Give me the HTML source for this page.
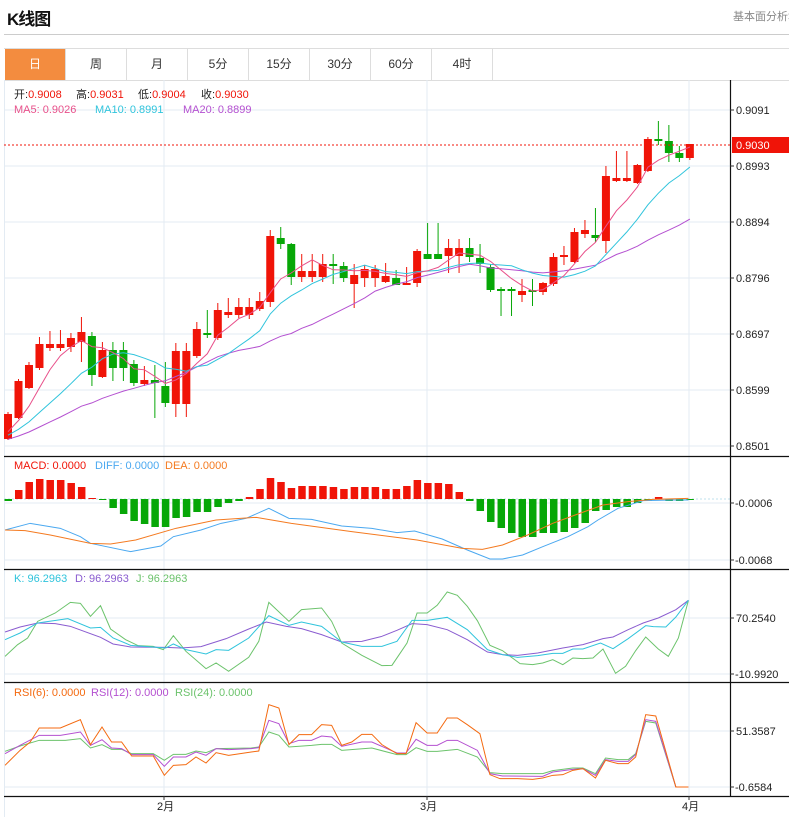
<!DOCTYPE html>
<html><head><meta charset="utf-8">
<style>
html,body{margin:0;padding:0;background:#fff;width:789px;height:817px;overflow:hidden;font-family:"Liberation Sans","Noto Sans CJK SC",sans-serif;}
.hdr{position:absolute;left:7px;top:5px;font-size:17px;font-weight:bold;color:#111;letter-spacing:-1px}
.rt{position:absolute;left:733px;top:8px;font-size:11px;color:#888;white-space:nowrap}
.hl{position:absolute;left:4px;top:34px;width:785px;height:1px;background:#ccc}
.tabs{position:absolute;left:4px;top:48px;width:785px;height:31px;border-top:1px solid #ddd;border-bottom:1px solid #ddd;}
.tab{position:absolute;top:0;height:31px;width:60px;border-right:1px solid #ddd;font-size:12px;line-height:31px;text-align:center;color:#333}
.tab.on{background:#f38c3f;color:#fff}
svg{position:absolute;left:0;top:0}
</style></head><body>
<div class="hdr">K线图</div>
<div class="rt">基本面分析&gt;</div>
<div class="hl"></div>
<div class="tabs">
<div class="tab on" style="left:1px">日</div>
<div class="tab" style="left:62px">周</div>
<div class="tab" style="left:123px">月</div>
<div class="tab" style="left:184px">5分</div>
<div class="tab" style="left:245px">15分</div>
<div class="tab" style="left:306px">30分</div>
<div class="tab" style="left:367px">60分</div>
<div class="tab" style="left:428px">4时</div>
</div>
<svg id="s" width="789" height="817" xmlns="http://www.w3.org/2000/svg" font-family="Liberation Sans, Noto Sans CJK SC, sans-serif" font-size="11">
<g stroke="#e3ebf3" stroke-width="1">
<line x1="4" y1="110" x2="730" y2="110"/><line x1="4" y1="166" x2="730" y2="166"/><line x1="4" y1="222" x2="730" y2="222"/><line x1="4" y1="278" x2="730" y2="278"/><line x1="4" y1="334" x2="730" y2="334"/><line x1="4" y1="390" x2="730" y2="390"/><line x1="4" y1="446" x2="730" y2="446"/>
<line x1="4" y1="503" x2="730" y2="503"/><line x1="4" y1="560" x2="730" y2="560"/>
<line x1="4" y1="618" x2="730" y2="618"/><line x1="4" y1="674" x2="730" y2="674"/>
<line x1="4" y1="731" x2="730" y2="731"/><line x1="4" y1="787" x2="730" y2="787"/>
<line x1="164" y1="80" x2="164" y2="796"/><line x1="427" y1="80" x2="427" y2="796"/><line x1="689" y1="80" x2="689" y2="796"/>
<line x1="4.5" y1="80" x2="4.5" y2="817"/>
</g>
<line x1="4" y1="499" x2="730" y2="499" stroke="#bfe0ee" stroke-dasharray="2,2"/>
<g id="cand"></g>
<g id="ma" fill="none" stroke-width="1"></g>
<g id="macd"></g>
<g fill="none" stroke-width="1">
<g transform="translate(0,440) scale(0.5025,0.3333)">
<polyline vector-effect="non-scaling-stroke" stroke="#4aa8f0" points="10,270 60,250 120,265 160,290 180,310 260,335 320,318 345,290 400,270 440,250 490,235 535,205 575,235 620,238 680,258 740,265 790,278 825,273 880,297 930,330 975,357 1000,357 1040,345 1080,320 1130,290 1170,260 1190,240 1230,205 1280,182 1340,180 1370,180"/>
<polyline vector-effect="non-scaling-stroke" stroke="#f47a20" points="10,270 50,272 100,285 180,310 220,312 270,300 350,265 430,240 510,232 580,250 700,275 830,300 920,325 960,328 1000,315 1050,285 1100,250 1150,222 1200,195 1250,185 1300,178 1370,175"/>
</g>
<g transform="translate(0,568) scale(0.5025,0.3333)">
<polyline vector-effect="non-scaling-stroke" stroke="#6cc36c" points="10,265 35,230 55,210 75,160 110,135 140,103 160,106 180,145 200,113 220,183 250,215 275,233 305,235 325,245 345,203 370,250 410,302 430,285 455,310 495,268 515,220 535,103 575,160 600,125 640,120 660,160 680,225 720,262 760,293 780,292 810,225 830,135 850,135 870,112 890,72 910,82 930,115 950,158 975,232 1000,248 1035,287 1060,290 1080,285 1100,275 1120,290 1140,270 1160,272 1180,270 1200,243 1225,316 1245,295 1265,248 1285,207 1310,243 1330,265 1350,210 1370,97"/>
<polyline vector-effect="non-scaling-stroke" stroke="#8a5cd0" points="10,192 40,177 75,165 110,167 140,175 200,208 225,228 260,237 330,238 360,240 400,236 450,212 495,183 530,162 570,175 600,182 640,200 680,222 720,220 760,205 790,187 820,167 850,170 890,185 930,215 970,252 1000,260 1030,262 1070,255 1120,240 1160,230 1200,212 1220,207 1250,185 1280,165 1310,150 1345,125 1370,97"/>
<polyline vector-effect="non-scaling-stroke" stroke="#30c4dc" points="10,215 40,195 75,165 135,152 180,180 200,178 225,210 260,232 330,240 345,228 370,245 410,258 430,245 455,247 495,210 535,143 575,172 600,162 640,175 680,222 720,235 760,235 790,220 820,157 850,157 890,148 930,185 970,245 1000,260 1030,268 1070,263 1100,256 1120,256 1140,243 1160,243 1195,225 1220,242 1250,212 1285,173 1300,176 1325,177 1345,147 1370,97"/>
</g>
<g transform="translate(0,682) scale(0.5025,0.3333)">
<polyline vector-effect="non-scaling-stroke" stroke="#6cc36c" points="10,208 40,192 78,175 130,175 160,170 180,198 203,188 222,202 242,202 262,215 305,215 327,235 345,217 370,217 390,207 410,212 430,200 500,198 515,195 535,150 555,160 575,195 620,190 640,187 660,187 680,205 740,198 790,218 808,218 828,197 850,208 870,208 910,202 950,225 975,272 1000,275 1080,275 1100,266 1140,258 1160,258 1185,275 1205,228 1230,233 1250,233 1265,215 1285,118 1305,123 1345,315 1370,315"/>
<polyline vector-effect="non-scaling-stroke" stroke="#b450d0" points="10,215 40,190 78,160 120,160 160,150 180,190 203,173 222,198 242,200 262,218 305,218 327,253 345,225 370,225 390,210 410,220 430,200 455,203 500,200 515,197 535,115 555,125 575,185 595,175 620,175 640,162 660,165 680,193 720,180 740,180 790,213 808,213 828,172 850,190 870,190 890,175 910,175 950,205 975,275 1000,282 1080,283 1100,270 1140,262 1160,260 1185,280 1205,233 1230,238 1250,238 1265,218 1285,113 1305,118 1345,315 1370,315"/>
<polyline vector-effect="non-scaling-stroke" stroke="#f46a10" points="10,250 40,205 60,180 78,138 120,138 160,113 180,188 203,135 222,180 242,180 262,222 305,222 327,280 345,250 370,248 390,225 410,243 430,212 455,220 500,210 515,207 535,68 555,78 575,188 595,158 620,158 640,128 660,130 680,190 700,180 720,157 740,157 760,188 790,215 808,215 828,122 850,153 870,153 890,108 910,108 930,128 955,155 975,278 995,290 1030,290 1060,292 1080,288 1100,280 1120,278 1140,265 1160,260 1185,288 1205,235 1230,245 1250,245 1265,225 1285,98 1305,102 1345,315 1370,315"/>
</g>
</g>
<line x1="4" y1="145" x2="730" y2="145" stroke="#f01408" stroke-dasharray="2,2"/>
<g stroke="#111" stroke-width="1.2">
<line x1="730.5" y1="80" x2="730.5" y2="796"/>
<line x1="4" y1="456.5" x2="789" y2="456.5"/>
<line x1="4" y1="569.5" x2="789" y2="569.5"/>
<line x1="4" y1="682.5" x2="789" y2="682.5"/>
<line x1="4" y1="796.5" x2="789" y2="796.5"/>
</g>
<g stroke="#333"><line x1="730" y1="110" x2="734" y2="110"/><line x1="730" y1="166" x2="734" y2="166"/><line x1="730" y1="222" x2="734" y2="222"/><line x1="730" y1="278" x2="734" y2="278"/><line x1="730" y1="334" x2="734" y2="334"/><line x1="730" y1="390" x2="734" y2="390"/><line x1="730" y1="446" x2="734" y2="446"/><line x1="730" y1="503" x2="734" y2="503"/><line x1="730" y1="560" x2="734" y2="560"/><line x1="730" y1="618" x2="734" y2="618"/><line x1="730" y1="674" x2="734" y2="674"/><line x1="730" y1="731" x2="734" y2="731"/><line x1="730" y1="787" x2="734" y2="787"/>
<line x1="164" y1="796" x2="164" y2="800"/><line x1="427" y1="796" x2="427" y2="800"/><line x1="689" y1="796" x2="689" y2="800"/></g>
<g fill="#222">
<text x="736" y="114">0.9091</text><text x="736" y="170">0.8993</text><text x="736" y="226">0.8894</text><text x="736" y="282">0.8796</text><text x="736" y="338">0.8697</text><text x="736" y="394">0.8599</text><text x="736" y="450">0.8501</text>
<text x="735" y="507">-0.0006</text><text x="735" y="564">-0.0068</text>
<text x="736" y="622">70.2540</text><text x="735" y="678">-10.9920</text>
<text x="736" y="735">51.3587</text><text x="735" y="791">-0.6584</text>
<text x="157" y="810">2月</text><text x="420" y="810">3月</text><text x="682" y="810">4月</text>
</g>
<rect x="732" y="137" width="57" height="16" fill="#f01408"/>
<text x="736" y="149" fill="#fff">0.9030</text>
<text y="98" fill="#222"><tspan x="14">开:</tspan><tspan fill="#f01408">0.9008</tspan><tspan x="76">高:</tspan><tspan fill="#f01408">0.9031</tspan><tspan x="138">低:</tspan><tspan fill="#f01408">0.9004</tspan><tspan x="201">收:</tspan><tspan fill="#f01408">0.9030</tspan></text>
<text y="113" fill="#e8508a"><tspan x="14">MA5: 0.9026</tspan><tspan x="95" fill="#30c4dc">MA10: 0.8991</tspan><tspan x="183" fill="#b450d0">MA20: 0.8899</tspan></text>
<text y="469" fill="#f01408"><tspan x="14">MACD: 0.0000</tspan><tspan x="95" fill="#4aa8f0">DIFF: 0.0000</tspan><tspan x="165" fill="#f47a20">DEA: 0.0000</tspan></text>
<text y="582" fill="#30c4dc"><tspan x="14">K: 96.2963</tspan><tspan x="75" fill="#8a5cd0">D: 96.2963</tspan><tspan x="136" fill="#6cc36c">J: 96.2963</tspan></text>
<text y="696" fill="#f46a10"><tspan x="14">RSI(6): 0.0000</tspan><tspan x="91" fill="#b450d0">RSI(12): 0.0000</tspan><tspan x="175" fill="#6cc36c">RSI(24): 0.0000</tspan></text>
</svg>
<script>
var C=[
['r',414,439,412,440],['r',381,418,379,419],['r',365,388,362,389],['r',344,368,337,370],['r',344,348,331,351],['r',344,348,330,351],['r',338,347,333,352],['r',332,342,317,362],
['g',336,375,332,386],['r',350,377,342,378],['g',350,368,342,381],['g',350,368,342,381],['g',364,383,360,386],['r',380,384,366,386],['g',380,383,365,418],['g',386,403,362,407],
['r',351,404,343,417],['r',351,404,343,417],['r',329,356,322,358],['g',333,335,310,338],['r',310,338,303,340],['r',312,315,298,318],['r',307,315,298,318],['r',307,315,298,319],
['r',301,309,292,311],['r',236,302,230,307],['g',238,244,227,249],['g',244,277,243,285],['r',271,277,254,282],['r',271,277,254,282],['r',264,277,254,282],['g',264,266,254,284],
['g',266,278,262,282],['r',275,284,264,308],
['r',269,278,265,287],['r',269,278,265,287],['r',276,282,263,283],['g',278,285,270,285],['r',283,285,267,285],['r',251,283,249,287],['g',254,259,223,259],['g',254,259,223,259],
['r',248,256,239,273],['r',248,256,239,273],['g',248,257,238,262],['g',258,264,244,273],['g',267,290,264,292],['g',289,291,287,316],['g',289,291,287,316],['r',291,295,279,302],
['g',290,292,279,306],['r',283,292,282,295],['r',257,284,253,286],['r',255,257,246,265],['r',232,262,228,263],['r',230,234,220,238],['g',235,238,208,242],['r',176,241,166,253],
['r',178,181,151,182],['r',178,181,151,182],['r',165,183,164,184],['r',139,171,137,172],['g',139,141,121,145],['g',141,153,125,162],['g',153,158,146,162],['r',144,158,144,160]];
var M=[501,490,482,479,480,480,483,487,498,499,508,514,521,524,527,527,518,517,512,512,507,503,501,497,489,478,482,488,486,486,486,487,489,487,487,487,489,489,486,480,483,483,484,492,501,511,522,528,533,537,537,533,533,532,528,523,511,510,507,507,503,501,497,501,501,500];
var ns="http://www.w3.org/2000/svg";
function el(p,t,a){var e=document.createElementNS(ns,t);for(var k in a)e.setAttribute(k,a[k]);p.appendChild(e);return e;}
var g=document.getElementById('cand'),mg=document.getElementById('macd'),ma=document.getElementById('ma');
var closes=[];for(var i=0;i<19;i++)closes.push(446-i*0.6);
for(var i=0;i<C.length;i++){var c=C[i],x=8+i*10.49,col=c[0]=='r'?'#f01408':'#07a707';
el(g,'line',{x1:x,x2:x,y1:c[3],y2:c[4],stroke:col,'stroke-width':1});
el(g,'rect',{x:x-4,y:c[1],width:8,height:Math.max(1.5,c[2]-c[1]),fill:col});
closes.push(c[0]=='r'?c[1]:c[2]);
var v=M[i]-499,mc=v<0?'#f01408':'#07a707';
el(mg,'rect',{x:x-3.5,y:Math.min(499,M[i]),width:7.5,height:Math.max(1,Math.abs(v)),fill:mc});}
function maLine(n,col){var pts=[];for(var i=0;i<C.length;i++){var s=0;for(var j=0;j<n;j++)s+=closes[19+i-j];pts.push((8+i*10.49).toFixed(1)+','+(s/n).toFixed(1));}
el(ma,'polyline',{points:pts.join(' '),stroke:col,fill:'none'});}
maLine(20,'#b450d0');maLine(10,'#30c4dc');maLine(5,'#e8508a');
</script>
</body></html>
